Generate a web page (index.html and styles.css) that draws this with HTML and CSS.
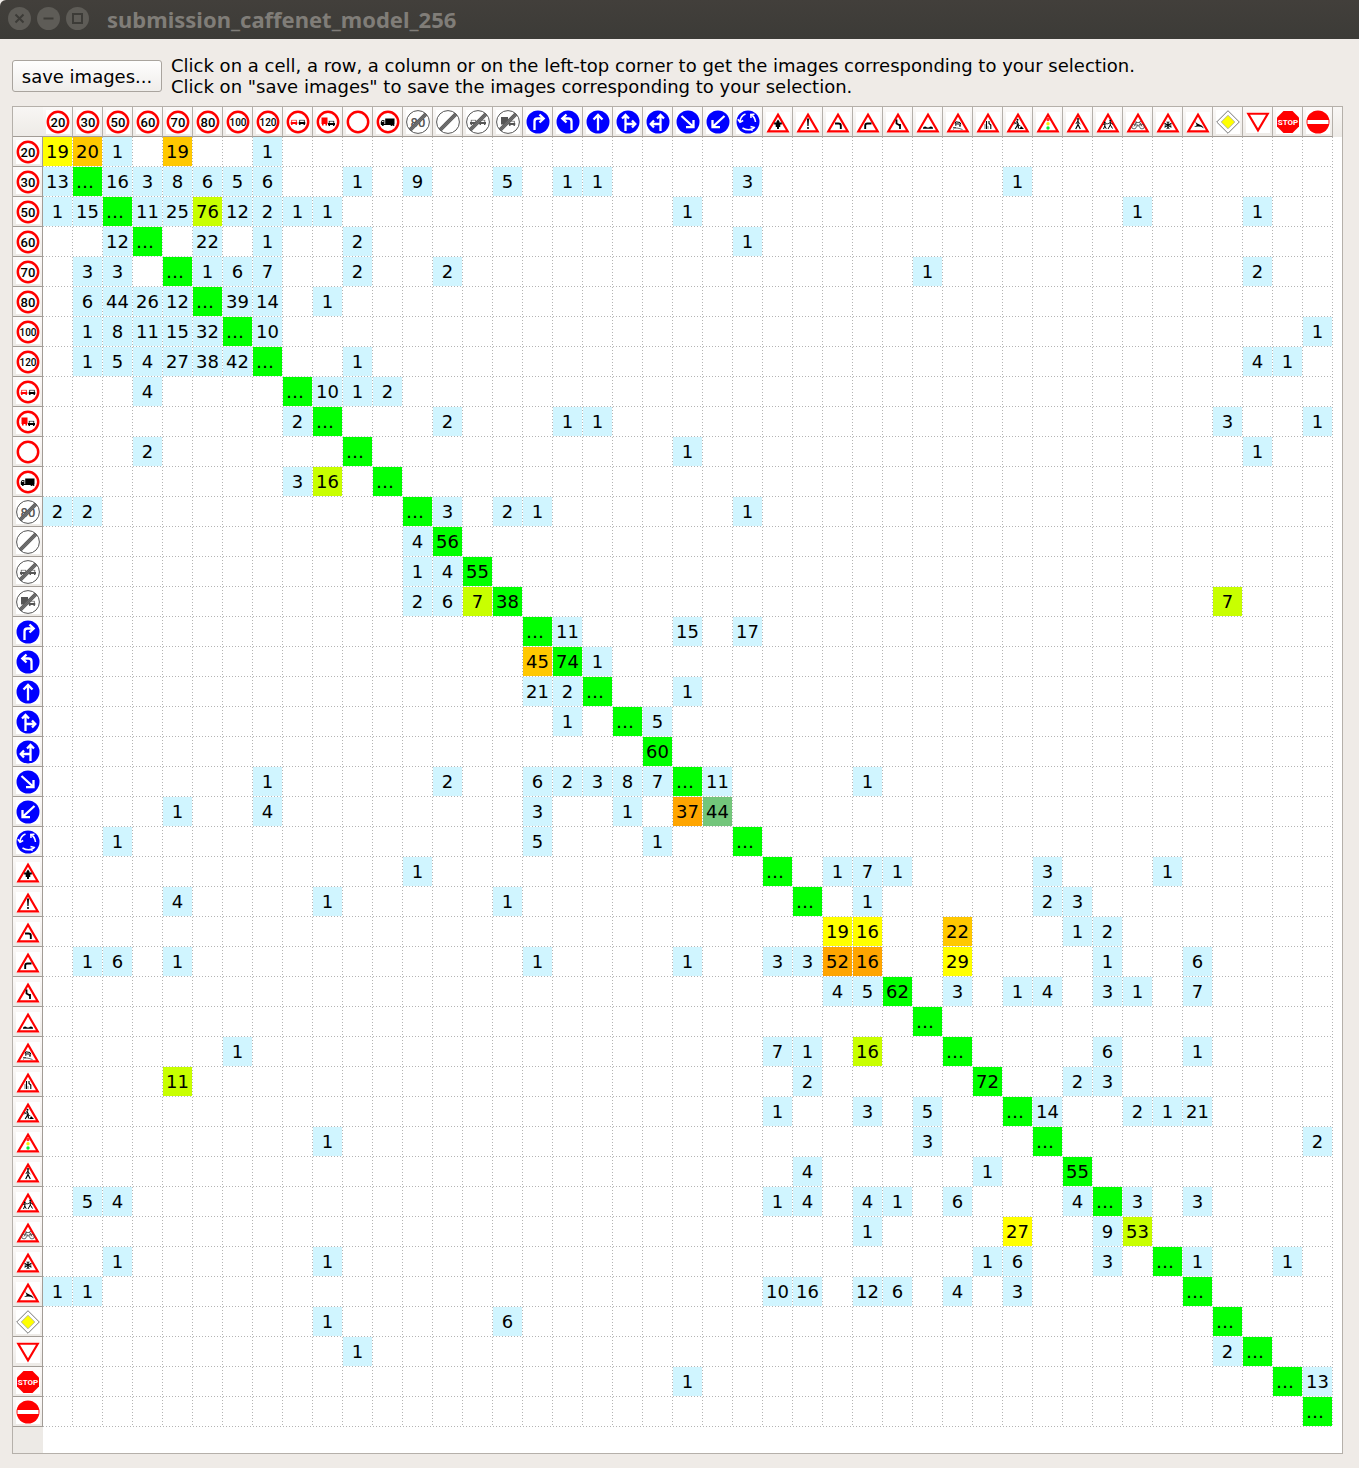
FILE: index.html
```html
<!DOCTYPE html>
<html lang="en">
<head>
<meta charset="utf-8">
<title>submission_caffenet_model_256</title>
<link rel="stylesheet" href="styles.css">
</head>
<body>
<svg class="sprite" aria-hidden="true">
  <defs>
    <symbol id="ring" viewBox="0 0 24 24"><rect width="24" height="24" fill="#fff"/><circle cx="12" cy="12" r="10.2" fill="#fff" stroke="#f00" stroke-width="2.5"/></symbol>
    <symbol id="end" viewBox="0 0 24 24"><rect width="24" height="24" fill="#fff"/><circle cx="12" cy="12" r="11.4" fill="#fff" stroke="#555" stroke-width="1"/></symbol>
    <symbol id="slash" viewBox="0 0 24 24"><path d="M2.800 18.500 18.500 2.800 21.200 5.500 5.500 21.200Z" fill="#5c5c5c"/><path d="M3.800 19.500 19.500 3.800M4.700 20.400 20.400 4.700" stroke="#999" stroke-width=".4"/></symbol>
    <symbol id="blue" viewBox="0 0 24 24"><rect width="24" height="24" fill="#fff"/><circle cx="12" cy="12" r="11.5" fill="#00f"/></symbol>
    <symbol id="warn" viewBox="0 0 24 24"><rect y="2" width="24" height="21" fill="#fff"/><path d="M12 4.6 21.8 21.4H2.2Z" fill="#fff" stroke="#f00" stroke-width="2.1"/></symbol>
    <symbol id="car" viewBox="0 0 7 6"><path d="M.8 2.600V.300H6.200V2.600H7V4.400H6.400V5.400H5V4.400H2V5.400H.6V4.400H0V2.600Z"/><path d="M1.600 2.400V1.100H5.400V2.400Z" fill="#fff"/></symbol>
  </defs>
</svg>
<header class="titlebar">
  <button class="winbtn" type="button" aria-label="Close"><svg viewBox="0 0 23 23"><path d="M7.5 7.5l8 8M15.500 7.500l-8 8"/></svg></button>
  <button class="winbtn" type="button" aria-label="Minimize"><svg viewBox="0 0 23 23"><path d="M6.500 11.500h10"/></svg></button>
  <button class="winbtn" type="button" aria-label="Maximize"><svg viewBox="0 0 23 23"><rect x="7" y="7" width="9" height="9"/></svg></button>
  <h1 class="title">submission_caffenet_model_256</h1>
</header>
<main class="content">
  <div class="toolbar">
    <button class="save" type="button">save images...</button>
    <p class="hint">Click on a cell, a row, a column or on the left-top corner to get the images corresponding to your selection.<br>Click on "save images" to save the images corresponding to your selection.</p>
  </div>
  <div class="panel">
    <table class="matrix" id="matrix" aria-label="Confusion matrix"></table>
  </div>
</main>
<script src="matrix.js"></script>
</body>
</html>
```
FILE: styles.css
```css
* { box-sizing: border-box; }

body {
  margin: 0;
  min-height: 100vh;
  display: flex;
  flex-direction: column;
  background: #efebe7;
  color: #000;
  font: 18px/21px "DejaVu Sans", sans-serif;
}

.sprite { position: absolute; width: 0; height: 0; }

.titlebar {
  display: flex;
  align-items: center;
  gap: 6px;
  height: 39px;
  padding: 0 8px 2px;
  background: linear-gradient(#423f3b, #3c3b37);
  border-top-left-radius: 6px;
}

.winbtn {
  width: 23px;
  height: 23px;
  padding: 0;
  border: 0;
  border-radius: 50%;
  background: #5e5c57;
}

.winbtn svg {
  display: block;
  width: 23px;
  height: 23px;
  fill: none;
  stroke: #3c3b37;
  stroke-width: 2;
}

.title {
  margin: 0 0 0 12px;
  color: #807d78;
  font: bold 22px/28px "Noto Sans", sans-serif;
}

.content {
  flex: 1;
  display: flex;
  flex-direction: column;
  gap: 9px;
  padding: 16px 16px 14px 12px;
}

.toolbar {
  display: flex;
  align-items: center;
  gap: 9px;
}

.save {
  width: 150px;
  height: 32px;
  flex: none;
  padding: 0;
  border: 1px solid #a9a49e;
  border-radius: 3px;
  background: linear-gradient(#fefefe, #efedea);
  color: #000;
  font: inherit;
}

.hint { margin: 0; }

.panel {
  flex: 1;
  border: 1px solid #b5b0aa;
  background:
    linear-gradient(#f8f6f4, #edeae6) top / 100% 30px no-repeat,
    linear-gradient(#edeae6, #edeae6) left / 30px 100% no-repeat,
    #fff;
}

.matrix {
  width: 1320px;
  table-layout: fixed;
  border-collapse: separate;
  border-spacing: 0;
}

.matrix tr { height: 30px; }

.matrix th,
.matrix td {
  width: 30px;
  height: 30px;
  padding: 0;
  overflow: hidden;
}

.matrix th {
  border: 0 solid #b5b0aa;
  border-bottom-color: #a29c96;
  background: linear-gradient(#fbf9f8, #edeae6);
}

.matrix thead th { border-width: 0 1px 1px 0; }
.matrix thead td { border-bottom: 1px solid #a29c96; }
.matrix tbody th { border-width: 0 1px 1px 0; border-right-color: #a29c96; }

.matrix tbody td {
  --fill: transparent;
  padding: 0 1px 1px 0;
  background:
    repeating-linear-gradient(#b4b4b4 0 1px, #fff 1px 3px) right / 1px 100% no-repeat,
    repeating-linear-gradient(90deg, #b4b4b4 0 1px, #fff 1px 3px) bottom / 100% 1px no-repeat,
    var(--fill);
  text-align: center;
}

.matrix tbody td.low { --fill: #d0f5ff; }
.matrix tbody td.yellow { --fill: #ffff00; }
.matrix tbody td.amber { --fill: #ffc800; }
.matrix tbody td.orange { --fill: #ffa500; }
.matrix tbody td.lime { --fill: #c8ff00; }
.matrix tbody td.green { --fill: #00ff00; }
.matrix tbody td.sage { --fill: #73c67b; }
.matrix tbody td.more { padding-left: 3px; text-align: left; }

.sign {
  display: block;
  width: 24px;
  height: 24px;
  margin: 2px 2px 2px 3px;
}

.sign text {
  font-family: Roboto, "Liberation Sans", sans-serif;
  font-weight: 500;
  text-anchor: middle;
}

.two { font-size: 13px; }
.three { font-size: 10px; }

.sign .stop {
  font-size: 8px;
  font-weight: bold;
  fill: #fff;
}

.arrow {
  fill: none;
  stroke: #fff;
  stroke-width: 2.3;
}

.arrow.thin { stroke-width: 1.5; }
```
FILE: matrix.js
```js
const use = (id) => `<use href="#${id}" width="24" height="24"/>`;
const limit = (n) => use('ring') +
  `<text class="${n > 99 ? 'three' : 'two'}" x="12" y="${n > 99 ? 15.5 : 16.5}">${n}</text>`;
const car = (x, y, color) => `<use href="#car" x="${x}" y="${y}" width="7" height="6" fill="${color}"/>`;
const blue = (d, kind = '') => use('blue') + `<path class="arrow ${kind}" d="${d}"/>`;
const warn = (body) => use('warn') + body;
const line = (d, w = 1.4) => `<path d="${d}" fill="none" stroke="#000" stroke-width="${w}"/>`;
const shape = (d) => `<path d="${d}"/>`;
const dot = (x, y, r, color = '#000') => `<circle cx="${x}" cy="${y}" r="${r}" fill="${color}"/>`;

// One traffic sign per class, in class order.
const signs = [
  ...[20, 30, 50, 60, 70, 80, 100, 120].map(limit),
  use('ring') + car(4.5, 9.500, '#f00') + car(12.5, 9.500, '#000'),
  use('ring') + '<path d="M5.500 7.500h6v6.500h-6zM6 14h1.600v1.500H6zM9.500 14H11v1.500H9.500z" fill="#f00"/>' + car(12, 10.5, '#000'),
  use('ring'),
  use('ring') + shape('M9.200 8.500h9.300v5.500H9.200zM4.800 14.500v-2.500l1.200-2H8.400v4.500zM5 14h13v1H5z') + dot(6.800, 15, 1) + dot(15.500, 15, 1) + dot(17.500, 15, 1) + '<path d="M5.800 12 6.600 10.800H7.500V12Z" fill="#fff"/>',
  use('end') + '<text class="two" x="12" y="16.500" fill="#555">80</text>' + use('slash'),
  use('end') + use('slash'),
  use('end') + car(4, 9.500, '#555') + car(13, 9.500, '#555') + use('slash'),
  use('end') + '<path d="M5 7h7v7.500H5z" fill="#555"/>' + car(12.500, 10.5, '#555') + use('slash'),
  blue('M8.500 20V11.500Q8.500 8.500 11.500 8.500H17.500M13.500 4.500 17.700 8.500 13.500 12.500'),
  blue('M15.500 20V11.500Q15.500 8.500 12.500 8.500H6.500M10.500 4.500 6.300 8.500 10.500 12.500'),
  blue('M12 20.500V5M7.500 9.500 12 5 16.500 9.500'),
  blue('M9.500 21V5M6 8.500 9.500 5 13 8.500M9.500 14H19M16 10.500 19.300 14 16 17.500'),
  blue('M14.500 21V5M11 8.500 14.500 5 18 8.500M14.500 14H5M8 10.500 4.700 14 8 17.500'),
  blue('M5.500 6 17.500 17M17.500 10V17.200H10'),
  blue('M18.500 6 6.500 17M6.500 10V17.200H14'),
  blue('M4 11.500Q4.500 6 9.500 4M1.800 9.200 4 12.200 7.200 10.500M15 4.500Q19 7 19.500 12M18.500 4.300 14.800 4.500 15 8M18 18Q12.500 21.500 6.500 18M15.500 20.800 18.200 17.500 14.500 16.500', 'thin'),
  warn(shape('M12 9.500 13.500 11.500V12.500H15.800V14.500H14.300V17H13V19H11V17H9.700V14.500H8.200V12.500H10.500V11.500Z')),
  warn(shape('M11 8.500H13L12.600 16H11.400Z') + dot(12, 18, 1.100)),
  warn(line('M14.800 19V15.500Q14.800 13.500 12.500 13.500H9', 1.900)),
  warn(line('M9.200 19V15.500Q9.200 13.500 11.500 13.500H15.500', 1.900)),
  warn(line('M10.500 9.500V13.500L14 15.500V19M14 14V16', 1.800)),
  warn(shape('M7 18.800V17.800Q9 15.500 11 17.500H13Q15 15.500 17 17.800V18.800Z')),
  warn(line('M9 13.500 9.800 11.800 14 12.500 14.800 14.200 9.500 13.800Z', 1) + line('M7 19.500Q8 17.500 11 18T16.500 19.500M7 17.500H10', .6) + dot(9.800, 15, .8) + dot(14, 15.800, .9)),
  warn(line('M10.500 19V11M13 11V13.500L14.800 15V19', 1.100) + line('M9 19V14M12 19V16', .5)),
  warn(dot(11.500, 9.800, 1) + line('M10.800 11 12.200 14 9.200 19M12 14 12.500 18.500', 1.200) + line('M11 11.500 8 14.500M8 12.500 14.500 16', .8) + shape('M13 19 15.300 16.300 18 19Z')),
  warn(dot(12, 9.500, 1.700, '#f33') + dot(12, 13.700, 1.700, '#fe0') + dot(12, 18, 1.700, '#0e3')),
  warn(dot(12, 9, 1) + line('M12 10V14.500L9.700 19M12 14.500 14.300 19', 1.200) + line('M9.800 14 11.500 11.300 14.300 14', .9)),
  warn(dot(8.800, 12.500, .9) + dot(14.300, 10.800, 1) + line('M8.800 13.500V16L7.500 19M8.800 16 10.300 18.800M14.300 12V15L12 19M14.300 15 16.500 18.500', 1) + line('M6.800 14.500 11.500 13.500M11.500 14 14.300 12.500 17 14.500', .8)),
  warn('<g fill="none" stroke="#444" stroke-width=".8"><circle cx="8" cy="16.500" r="2.400"/><circle cx="16" cy="16.500" r="2.400"/><path d="M8 16.500 10 12.500H14L16 16.500M10.500 13.500 12 16.500 14 13.500M9 12H11M13.500 11.500H15"/></g>'),
  warn(line('M12 11.500V19M8.500 13.300 15.500 17.300M15.500 13.300 8.500 17.300', 1.100) + line('M10.500 12 12 13.200 13.500 12M10.500 18.600 12 17.400 13.500 18.600M8.500 15 10 15.300M14 15.300 15.500 15', .8)),
  warn(shape('M9 10.500 10.500 13 13.500 14.500 16 15.800 18 18.500 15 16.800 12 16.500 8 17 10.800 15.200 10 13.500Z')),
  '<rect width="24" height="24" fill="#fff"/><path d="M12 .700 23.300 12 12 23.300.700 12Z" fill="#fff" stroke="#777"/><path d="M12 5.200 18.800 12 12 18.800 5.200 12Z" fill="#ff0" stroke="#aaa" stroke-width=".8"/>',
  '<rect y="2" width="24" height="21" fill="#fff"/><path d="M2.200 3.700H21.800L12 20.400Z" fill="#fff" stroke="#f00" stroke-width="2.100"/>',
  '<rect width="24" height="24" fill="#fff"/><path d="M7.500 1H16.500L23 7.500V16.500L16.500 23H7.500L1 16.500V7.500Z" fill="#f00"/><text class="stop" x="12" y="15">STOP</text>',
  '<rect width="24" height="24" fill="#fff"/><circle cx="12" cy="12" r="11.500" fill="#f00"/><path d="M1.500 10h21v4h-21z" fill="#fff"/>'
];

// Non-empty cells as column:count, with an optional letter for the fill.
// A count of "…" marks a number too wide for its cell.
const rows = [
  '0:19y 1:20a 2:1 4:19a 7:1',
  '0:13 1:… 2:16 3:3 4:8 5:6 6:5 7:6 10:1 12:9 15:5 17:1 18:1 23:3 32:1',
  '0:1 1:15 2:… 3:11 4:25 5:76l 6:12 7:2 8:1 9:1 21:1 36:1 40:1',
  '2:12 3:… 5:22 7:1 10:2 23:1',
  '1:3 2:3 4:… 5:1 6:6 7:7 10:2 13:2 29:1 40:2',
  '1:6 2:44 3:26 4:12 5:… 6:39 7:14 9:1',
  '1:1 2:8 3:11 4:15 5:32 6:… 7:10 42:1',
  '1:1 2:5 3:4 4:27 5:38 6:42 7:… 10:1 40:4 41:1',
  '3:4 8:… 9:10 10:1 11:2',
  '8:2 9:… 13:2 17:1 18:1 39:3 42:1',
  '3:2 10:… 21:1 40:1',
  '8:3 9:16l 11:…',
  '0:2 1:2 12:… 13:3 15:2 16:1 23:1',
  '12:4 13:56g',
  '12:1 13:4 14:55g',
  '12:2 13:6 14:7l 15:38g 39:7l',
  '16:… 17:11 21:15 23:17',
  '16:45a 17:74g 18:1',
  '16:21 17:2 18:… 21:1',
  '17:1 19:… 20:5',
  '20:60g',
  '7:1 13:2 16:6 17:2 18:3 19:8 20:7 21:… 22:11 27:1',
  '4:1 7:4 16:3 19:1 21:37o 22:44s',
  '2:1 16:5 20:1 23:…',
  '12:1 24:… 26:1 27:7 28:1 33:3 37:1',
  '4:4 9:1 15:1 25:… 27:1 33:2 34:3',
  '26:19y 27:16y 30:22a 34:1 35:2',
  '1:1 2:6 4:1 16:1 21:1 24:3 25:3 26:52o 27:16o 30:29y 35:1 38:6',
  '26:4 27:5 28:62g 30:3 32:1 33:4 35:3 36:1 38:7',
  '29:…',
  '6:1 24:7 25:1 27:16l 30:… 35:6 38:1',
  '4:11l 25:2 31:72g 34:2 35:3',
  '24:1 27:3 29:5 32:… 33:14 36:2 37:1 38:21',
  '9:1 29:3 33:… 42:2',
  '25:4 31:1 34:55g',
  '1:5 2:4 24:1 25:4 27:4 28:1 30:6 34:4 35:… 36:3 38:3',
  '27:1 32:27y 35:9 36:53l',
  '2:1 9:1 31:1 32:6 35:3 37:… 38:1 41:1',
  '0:1 1:1 24:10 25:16 27:12 28:6 30:4 32:3 38:…',
  '9:1 15:6 39:…',
  '10:1 39:2 40:…',
  '21:1 41:… 42:13',
  '42:…'
];

const fills = { y: 'yellow', a: 'amber', o: 'orange', l: 'lime', g: 'green', s: 'sage' };
const sign = (i) => `<svg class="sign" viewBox="0 0 24 24" aria-hidden="true">${signs[i]}</svg>`;

let html = '<thead><tr><td></td>' +
  signs.map((_, i) => `<th scope="col">${sign(i)}</th>`).join('') + '</tr></thead><tbody>';

rows.forEach((row, r) => {
  const cells = {};
  for (const item of row.split(' ')) {
    const [, col, count, key] = item.match(/^(\d+):(\d+|…)(\w?)$/);
    cells[col] = count === '…'
      ? '<td class="green more">…</td>'
      : `<td class="${fills[key] || 'low'}">${count}</td>`;
  }
  html += `<tr><th scope="row">${sign(r)}</th>` +
    signs.map((_, c) => cells[c] || '<td></td>').join('') + '</tr>';
});

document.getElementById('matrix').innerHTML = html + '</tbody>';
```
